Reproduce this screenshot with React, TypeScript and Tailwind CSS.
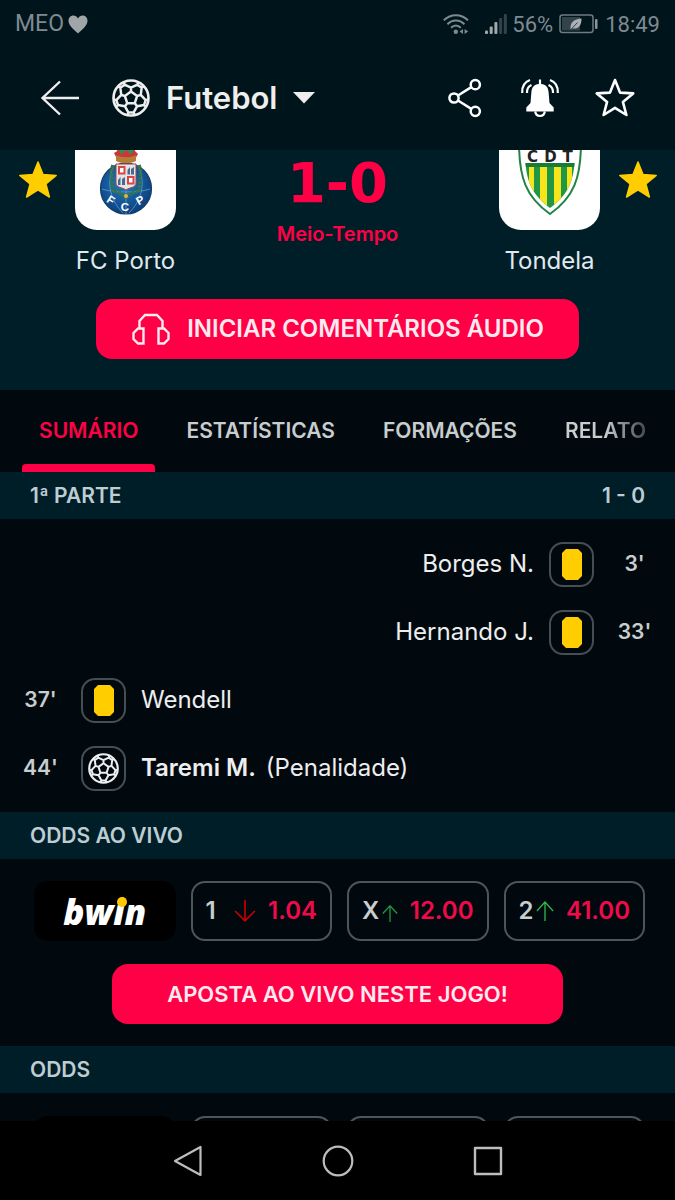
import React from 'react';

const polar = (radius: number, degrees: number) => {
  const a = (degrees * Math.PI) / 180;
  return `${(50 + radius * Math.cos(a)).toFixed(2)} ${(50 + radius * Math.sin(a)).toFixed(2)}`;
};

const spokes = [0, 1, 2, 3, 4].map((k) => -90 + 72 * k);
const ballPath =
  'M' + spokes.map((a) => polar(17, a)).join('L') + 'Z' +
  spokes
    .map(
      (a) =>
        `M${polar(17, a)}L${polar(27, a)}M${polar(46, a - 24)}L${polar(39, a - 26)}L${polar(27, a)}L${polar(39, a + 26)}L${polar(46, a + 24)}M${polar(39, a + 26)}L${polar(39, a + 46)}`,
    )
    .join('');

function Ball({ className }: { className: string }) {
  return (
    <svg viewBox="0 0 100 100" className={className} fill="none" stroke="currentColor" strokeWidth="7" strokeLinejoin="round" aria-hidden="true">
      <circle cx="50" cy="50" r="46" />
      <path d={ballPath} strokeWidth="6.5" />
    </svg>
  );
}

const starPath = 'M20 2 L25 14.6 L38.2 15.4 L27.9 23.9 L31.4 37 L20 29.8 L8.6 37 L12.1 23.9 L1.8 15.4 L15 14.6 Z';

function Star({ filled }: { filled?: boolean }) {
  return (
    <svg viewBox="0 0 40 40" className="size-10" fill={filled ? 'currentColor' : 'none'} stroke="currentColor" strokeWidth={filled ? 1.5 : 2.6} strokeLinejoin="round" aria-hidden="true">
      <path d={starPath} />
    </svg>
  );
}

function StatusBar() {
  return (
    <div className="flex h-[46px] items-center justify-between px-[15px] pt-0.5 font-[Roboto,sans-serif] text-[22px] text-[#7f8a90]">
      <div className="flex items-center gap-1">
        <span className="text-[23px]">MEO</span>
        <svg viewBox="0 0 20 19" className="h-[19px] w-5" fill="#a0a5a8" aria-hidden="true">
          <path d="M10 18.5C7 15.5 .5 11 .5 5.8C.5 2.6 2.7.5 5.3.5C7.4.5 9 1.6 10 3.4C11 1.6 12.6.5 14.7.5C17.3.5 19.5 2.6 19.5 5.8C19.5 11 13 15.5 10 18.5Z" />
        </svg>
      </div>
      <div className="flex items-center">
        <svg viewBox="0 0 26 21" className="mr-4 h-[21px] w-[26px]" fill="none" stroke="currentColor" strokeWidth="2" aria-hidden="true">
          <path d="M.8 6.3C7.8-.6 18-.6 25 6.3M4.4 10.2C9.4 5.2 16.4 5.2 21.4 10.2M8 13.8C11 10.9 14.8 10.9 17.8 13.8" />
          <circle cx="12.8" cy="17.7" r="2.2" fill="currentColor" stroke="none" />
          <path d="M20 15v5l-3.4-2.5zM21.6 15v5l3.6-2.5z" fill="currentColor" stroke="none" />
        </svg>
        <svg viewBox="0 0 22 20" className="mr-[5px] h-5 w-[22px]" fill="#a0a8ac" aria-hidden="true">
          <rect x="0" y="16.500" width="3" height="3.500" rx="1" />
          <rect x="4.700" y="12.500" width="3" height="7.500" rx="1" />
          <rect x="9.400" y="8" width="3" height="12" rx="1" />
          <rect x="14.100" y="4" width="3" height="16" rx="1" fill="#33434a" />
          <rect x="18.800" y="0" width="3" height="20" rx="1" fill="#33434a" />
        </svg>
        <span>56%</span>
        <svg viewBox="0 0 39 20" className="mr-[7px] ml-[6px] h-5 w-[39px]" aria-hidden="true">
          <rect x="1" y="1" width="33" height="17.500" rx="2.500" fill="none" stroke="#6f7b80" strokeWidth="1.500" />
          <rect x="3" y="3" width="18" height="13.500" fill="#33434a" />
          <rect x="36" y="5" width="2.500" height="10" rx="1" fill="#8b9599" />
          <path d="M11.500 15.500C11 8 15 5 22.500 4.500C22.500 11 20 15.500 13.500 14.200Z" fill="#a9b1b4" />
          <path d="M12 15.500L18.500 8.500" stroke="#33434a" strokeWidth="1" />
        </svg>
        <span>18:49</span>
      </div>
    </div>
  );
}

function Header() {
  return (
    <header className="flex h-[104px] items-center pr-[23px] pl-10 text-[#eeeeee]">
      <button type="button" aria-label="Voltar" className="mr-8">
        <svg viewBox="0 0 40 36" className="h-9 w-10" fill="none" stroke="currentColor" strokeWidth="2.4" aria-hidden="true">
          <path d="M39 18H2.500M20 1.500L2.500 18L20 34.500" />
        </svg>
      </button>
      <button type="button" className="flex items-center gap-4 text-[31px] font-semibold">
        <Ball className="size-[38px]" />
        <span>Futebol</span>
        <svg viewBox="0 0 22 12" className="h-3 w-[22px]" fill="currentColor" aria-hidden="true">
          <path d="M0 0h22L11 11.500z" />
        </svg>
      </button>
      <div className="ml-auto flex text-white">
        <button type="button" aria-label="Partilhar" className="flex w-[75px] justify-center">
          <svg viewBox="0 0 36 40" className="h-10 w-9" fill="none" stroke="currentColor" strokeWidth="2.500" aria-hidden="true">
            <circle cx="7" cy="20" r="4.600" />
            <circle cx="28.300" cy="6.700" r="4.600" />
            <circle cx="28.300" cy="33.300" r="4.600" />
            <path d="M11 17.500L24.300 9.100M11 22.500L24.300 30.900" />
          </svg>
        </button>
        <button type="button" aria-label="Notificações" className="flex w-[75px] justify-center">
          <svg viewBox="0 0 40 40" className="size-10" fill="none" stroke="currentColor" strokeWidth="2.200" aria-hidden="true">
            <path d="M18.900 1.500h2.200v4.500C26 6.500 28.300 9.500 28.600 14L29.500 25L33.700 29.500V33.500H6.300V29.500L10.500 25L11.400 14C11.700 9.500 14 6.500 18.900 6Z" fill="currentColor" stroke="none" />
            <path d="M15.200 33.500C16 39.500 24 39.500 24.800 33.500" />
            <path d="M10 2C4.500 4 1.800 9 2.200 15M11.500 7C8 8.500 6.800 11 7 15M30 2C35.500 4 38.200 9 37.800 15M28.500 7C32 8.500 33.200 11 33 15" />
          </svg>
        </button>
        <button type="button" aria-label="Adicionar aos favoritos" className="flex w-[75px] justify-center">
          <Star />
        </button>
      </div>
    </header>
  );
}

function PortoCrest() {
  return (
    <svg viewBox="0 0 54 70" className="h-[70px] w-[54px]" aria-label="FC Porto" role="img">
      <defs>
        <radialGradient id="portoBlue" cx="45%" cy="40%" r="60%">
          <stop offset="0" stopColor="#247cc4" />
          <stop offset="1" stopColor="#0c3f7c" />
        </radialGradient>
      </defs>
      <circle cx="27" cy="38.500" r="25.500" fill="url(#portoBlue)" stroke="#163c69" strokeWidth="1.200" />
      <path d="M27 14V64M3 39C15 43 39 43 51 39M14 18C7 34 12 51 24 63M40 18C47 34 42 51 30 63" fill="none" stroke="#5b9ed0" strokeWidth=".8" />
      <path d="M14 15C11 23 13 33 14 42M40 15C43 23 41 33 40 42M15 41C20 43 24 42 27 49C30 42 34 43 39 41" fill="none" stroke="#35774a" strokeWidth="3.500" strokeDasharray="3 1" />
      <path d="M18 0H36L34 9H20Z" fill="#3d8b4a" />
      <path d="M15 3L20 0L22 5L27 0L32 5L35 0L39 4L36 9H18Z" fill="#cf3340" />
      <path d="M17 5C23 8 31 8 37 5V11C31 14 23 14 17 11Z" fill="#b67b34" />
      <path d="M17 14H37V33C37 38 31 37 27 40C23 37 17 38 17 33Z" fill="#e5e4e5" stroke="#99464c" strokeWidth="1" />
      <rect x="19" y="16" width="7.500" height="8.500" fill="#d94646" />
      <rect x="28" y="26" width="7.500" height="8.500" fill="#d94646" />
      <path d="M21 18h3.500v4.500H21zM30 28h3.500v4.500H30z" fill="#fff" />
      <path d="M28.500 24.500V20L31 17V24.500M32 24.500V19L35 17V24.500M19 35V30L21.500 27V35M23 35V29L26 27V35" fill="#496992" />
      <circle cx="27" cy="46" r="2" fill="#e9b33b" />
      <g fill="#fff" fontFamily="Liberation Sans, sans-serif" fontWeight="700" fontSize="11.500" textAnchor="middle">
        <text transform="rotate(33 12 50)" x="12" y="54">F</text>
        <text x="26" y="60.500">C</text>
        <text transform="rotate(-30 41 50)" x="41" y="54">P</text>
      </g>
    </svg>
  );
}

function TondelaCrest() {
  return (
    <svg viewBox="0 0 64 70" className="h-[70px] w-16" aria-label="Tondela" role="img">
      <path d="M1 -8H63C63 28 56 47 32 64C8 47 1 28 1 -8Z" fill="#fff" stroke="#248344" strokeWidth="2" />
      <clipPath id="tondelaShield"><path d="M7.500 13H56.500C55 35 47 47 32 58C17 47 9 35 7.500 13Z" /></clipPath>
      <g clipPath="url(#tondelaShield)">
        <path d="M5 13H59V60H5Z" fill="#219746" />
        <path d="M11 17H16V45H11zM22 17H29V58H22zM36 17H43V58H36zM49 17H54V45H49z" fill="#f6e51c" />
        <path d="M5 13H59V17H5Z" fill="#187c39" />
      </g>
      <g fill="#222" fontFamily="DejaVu Sans, sans-serif" fontWeight="700" fontSize="15" textAnchor="middle">
        <text x="14.500" y="12">C</text>
        <text x="32.500" y="12">D</text>
        <text x="49.500" y="12">T</text>
      </g>
    </svg>
  );
}

function Team({ name, crest }: { name: string; crest: React.ReactNode }) {
  return (
    <div className="flex w-[101px] shrink-0 flex-col items-center">
      <div className="flex h-20 w-full justify-center rounded-b-[22px] bg-white">{crest}</div>
      <p className="mt-[15px] text-2xl whitespace-nowrap text-[#e0eaee]">{name}</p>
    </div>
  );
}

function Favorite({ team }: { team: string }) {
  return (
    <button type="button" aria-label={`Favorito: ${team}`} className="flex h-[60px] w-[75px] shrink-0 items-center justify-center text-[#ffcd00]">
      <Star filled />
    </button>
  );
}

function Match() {
  return (
    <section className="bg-[#001e28] pb-[31px]">
      <div className="flex items-start">
        <Favorite team="FC Porto" />
        <Team name="FC Porto" crest={<PortoCrest />} />
        <div className="flex flex-1 flex-col items-center text-[#ff0046]">
          <p className="font-['DejaVu_Sans',sans-serif] text-[56px] leading-[66px] font-bold">1-0</p>
          <p className="mt-0.5 text-xl leading-8 font-semibold">Meio-Tempo</p>
        </div>
        <Team name="Tondela" crest={<TondelaCrest />} />
        <Favorite team="Tondela" />
      </div>
      <div className="mt-[22px] px-24">
        <button type="button" className="flex h-[60px] w-full items-center justify-center gap-4 rounded-2xl bg-[#ff0046] text-2xl font-semibold text-[#ffeaf0]">
          <svg viewBox="0 0 40 32" className="h-8 w-10" fill="none" stroke="currentColor" strokeWidth="2.400" aria-hidden="true">
            <path d="M8.500 15V8L14 2H26L31.500 8V15M12.500 15.500V30.500H7L2.500 26V20L7 15.500ZM27.500 15.500V30.500H33L37.500 26V20L33 15.500Z" />
          </svg>
          <span>INICIAR COMENTÁRIOS ÁUDIO</span>
        </button>
      </div>
    </section>
  );
}

function Tabs() {
  return (
    <div role="tablist" className="flex h-[82px] gap-3.5 overflow-hidden pl-[22px] text-[21px] font-semibold text-[#c8cdcd]">
      <button role="tab" type="button" aria-selected="true" className="flex shrink-0 flex-col items-center text-[#ff0046]">
        <span className="flex flex-1 items-center px-[17px] pt-2">SUMÁRIO</span>
        <span className="h-2 w-full rounded-t bg-[#ff0046]" />
      </button>
      {['ESTATÍSTICAS', 'FORMAÇÕES'].map((t) => (
        <button key={t} role="tab" type="button" aria-selected="false" className="shrink-0 px-[17px]">{t}</button>
      ))}
      <button role="tab" type="button" aria-selected="false" className="shrink-0 bg-linear-to-r from-[#c8cdcd] from-50% to-[#343a40] to-90% bg-clip-text px-[17px] text-transparent">RELATO</button>
    </div>
  );
}

function SectionTitle({ title, aside }: { title: string; aside?: string }) {
  return (
    <div className="flex h-[47px] items-center justify-between bg-[#001e28] px-[30px] text-[21px] font-semibold text-[#bdcdd2]">
      <h2>{title}</h2>
      {aside && <span>{aside}</span>}
    </div>
  );
}

type EventRow = { minute: string; name: string; away?: boolean; goal?: boolean; note?: string };

const events: EventRow[] = [
  { minute: "3'", name: 'Borges N.', away: true },
  { minute: "33'", name: 'Hernando J.', away: true },
  { minute: "37'", name: 'Wendell' },
  { minute: "44'", name: 'Taremi M.', goal: true, note: '(Penalidade)' },
];

function Events() {
  return (
    <ul className="pt-[11px] pb-[10px]">
      {events.map((e) => (
        <li key={e.minute} className={`flex h-[68px] items-center ${e.away ? 'flex-row-reverse' : ''}`}>
          <span className="w-[81px] text-center text-[21px] font-semibold text-[#c8cdcd]">{e.minute}</span>
          <span className="flex size-[45px] items-center justify-center rounded-[14px] border-2 border-[#454f53] text-[#eeeeee]">
            {e.goal ? (
              <Ball className="size-[31px]" />
            ) : (
              <svg viewBox="0 0 20 31" className="h-[31px] w-5" fill="#ffcd00" aria-label="Cartão amarelo" role="img">
                <path d="M4 0H16L20 4V27L16 31H4L0 27V4Z" />
              </svg>
            )}
          </span>
          <span className="flex gap-2.5 px-[15px] text-2xl text-[#eeeeee]">
            <span className={e.goal ? 'font-semibold' : ''}>{e.name}</span>
            {e.note && <span>{e.note}</span>}
          </span>
        </li>
      ))}
    </ul>
  );
}

const odds = [
  { label: '1', value: '1.04', arrow: 'h-[22px] w-[22px] rotate-180 text-[#c80000]' },
  { label: 'X', value: '12.00', arrow: 'mt-1 h-[17px] w-4 text-[#24a148]' },
  { label: '2', value: '41.00', arrow: 'h-5 w-[18px] text-[#2bb54c]' },
];

function OddsRow() {
  return (
    <div className="grid grid-cols-4 gap-[15px] pr-[30px] pl-[34px]">
      <a href="#bwin" className="flex h-[60px] items-center justify-center rounded-[14px] bg-black font-['Open_Sans',sans-serif] text-[35px] leading-none font-extrabold text-white italic">
        <span className="relative">
          bwin
          <span className="absolute top-[3px] left-[54px] size-2.5 rounded-full bg-[#ffc800]" />
        </span>
      </a>
      {odds.map((o) => (
        <button key={o.label} type="button" className="flex h-[60px] items-center rounded-[14px] border-2 border-[#4d565a] px-[13px] text-2xl font-semibold">
          <span className="text-[#c8cdcd]">{o.label}</span>
          <svg viewBox="0 0 20 20" preserveAspectRatio="none" className={`mr-3 ml-auto shrink-0 ${o.arrow}`} fill="none" stroke="currentColor" strokeWidth="1.500" aria-hidden="true">
            <path d="M10 20V1M1 10L10 1L19 10" />
          </svg>
          <span className="text-[#f00a4a]">{o.value}</span>
        </button>
      ))}
    </div>
  );
}

function SystemNav() {
  return (
    <nav className="flex h-[79px] shrink-0 items-center justify-center bg-black text-[#bdbdbd]">
      <button type="button" aria-label="Anterior" className="flex w-[150px] justify-center">
        <svg viewBox="0 0 32 32" className="size-8" fill="none" stroke="currentColor" strokeWidth="2.200" strokeLinejoin="round" aria-hidden="true"><path d="M28.500 2V30L3 16Z" /></svg>
      </button>
      <button type="button" aria-label="Início" className="flex w-[150px] justify-center">
        <svg viewBox="0 0 32 32" className="size-8" fill="none" stroke="currentColor" strokeWidth="2.200" aria-hidden="true"><circle cx="16" cy="16" r="14.300" /></svg>
      </button>
      <button type="button" aria-label="Recentes" className="flex w-[150px] justify-center">
        <svg viewBox="0 0 32 32" className="size-8" fill="none" stroke="currentColor" strokeWidth="2.400" strokeLinejoin="round" aria-hidden="true"><rect x="3" y="3" width="26" height="26" /></svg>
      </button>
    </nav>
  );
}

export default function App() {
  return (
    <div className="flex h-screen flex-col overflow-hidden bg-[#01090f] font-[Inter,sans-serif]">
      <div className="shrink-0 bg-[#00141c]">
        <StatusBar />
        <Header />
      </div>
      <main className="min-h-0 flex-1 overflow-hidden">
        <Match />
        <Tabs />
        <SectionTitle title="1ª PARTE" aside="1 - 0" />
        <Events />
        <SectionTitle title="ODDS AO VIVO" />
        <div className="pt-[22px] pb-[22px]">
          <OddsRow />
          <div className="mt-[23px] px-28">
            <button type="button" className="h-[60px] w-full rounded-2xl bg-[#ff0046] text-[22px] font-semibold text-[#ffeaf0]">APOSTA AO VIVO NESTE JOGO!</button>
          </div>
        </div>
        <SectionTitle title="ODDS" />
        <div className="pt-[23px]">
          <OddsRow />
        </div>
      </main>
      <SystemNav />
    </div>
  );
}
